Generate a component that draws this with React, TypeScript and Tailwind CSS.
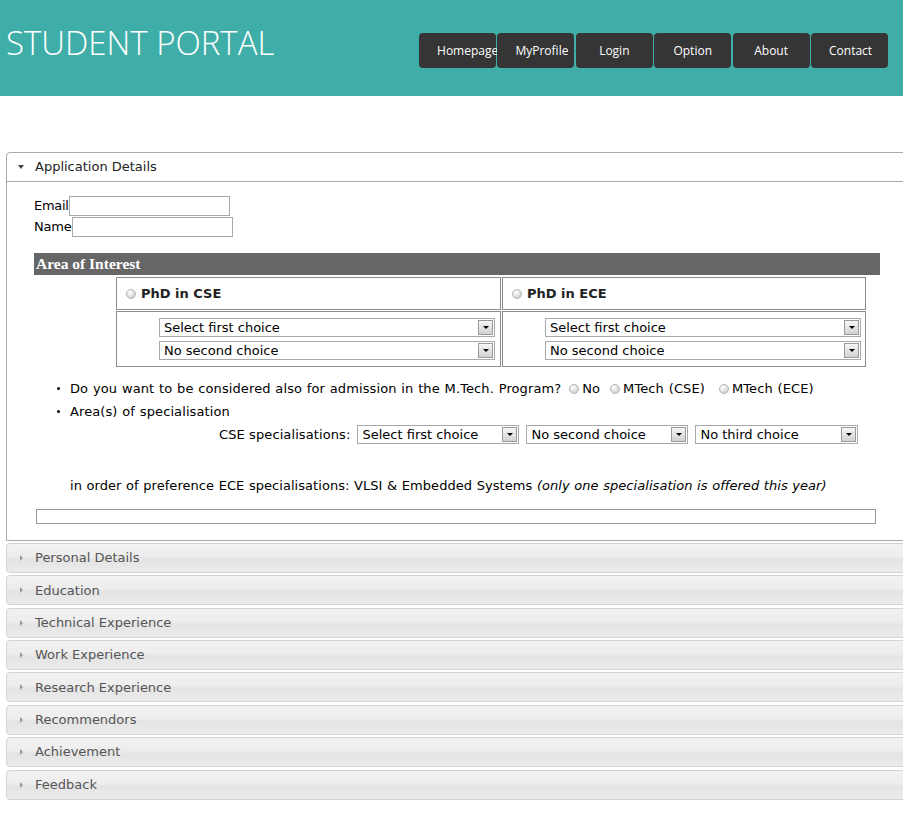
import React from "react";

const navItems = ["Homepage", "MyProfile", "Login", "Option", "About", "Contact"];
const closedPanels = [
  "Personal Details",
  "Education",
  "Technical Experience",
  "Work Experience",
  "Research Experience",
  "Recommendors",
  "Achievement",
  "Feedback",
];

function Radio() {
  return (
    <span className="inline-block h-[10px] w-[10px] shrink-0 rounded-full border border-[#b4b4b4] bg-[radial-gradient(circle_at_35%_30%,#ffffff,#d6d6d6_70%)]" />
  );
}

function Select({ label, width }: { label: string; width: string }) {
  return (
    <div className={`relative h-[19px] ${width} border border-[#a9a9a9] bg-white pl-[4px] text-[13px] leading-[17px] text-black`}>
      {label}
      <span className="absolute right-[1px] top-[1px] flex h-[15px] w-[15px] items-center justify-center border border-[#9a9a9a] bg-[linear-gradient(#f6f6f6,#d2d2d2)]">
        <span className="h-0 w-0 border-x-[3px] border-t-[3px] border-x-transparent border-t-black" />
      </span>
    </div>
  );
}

function Header() {
  return (
    <div className="flex h-[96px] bg-[#40aea8]">
      <h1 className="pl-[6px] pt-[26px] font-['Open_Sans',sans-serif] text-[33px] font-light leading-none text-white">
        STUDENT PORTAL
      </h1>
      <nav className="ml-auto mr-[15px] mt-[33px] flex gap-[1.4px]">
        {navItems.map((item) => (
          <div
            key={item}
            className="block h-[35px] w-[77px] whitespace-nowrap rounded-[4px] bg-[#353535] px-[18px] text-center font-['Open_Sans',sans-serif] text-[12px] leading-[35px] text-white"
          >
            {item}
          </div>
        ))}
      </nav>
    </div>
  );
}

function ApplicationPanel() {
  return (
    <div className="rounded-t-[4px] border border-[#aaaaaa] bg-white">
      <div className="flex h-[29px] items-center border-b border-[#aaaaaa] text-[13px] text-[#222]">
        <span className="ml-[11px] mr-[11px] h-0 w-0 border-x-[3px] border-t-[4px] border-x-transparent border-t-[#444]" />
        Application Details
      </div>

      <div className="pb-[16px] pl-[27px] pt-[13px] text-[13px] text-black">
        <div className="flex h-[21px] items-center">
          <span className="tracking-[-0.3px]">Email</span>
          <span className="h-[20px] w-[161px] border border-[#a9a9a9] bg-white" />
        </div>
        <div className="flex h-[21px] items-center">
          <span className="tracking-[-0.2px]">Name</span>
          <span className="h-[20px] w-[161px] border border-[#a9a9a9] bg-white" />
        </div>

        <div className="mt-[16px] h-[22px] w-[846px] bg-[#666666] pl-[2px] font-['Liberation_Serif',serif] text-[15.5px] font-bold leading-[22px] text-white">
          Area of Interest
        </div>

        <div className="ml-[82px] mt-[2px] grid grid-cols-[385px_364px] grid-rows-[33px_56px] gap-[1px]">
          <div className="flex items-center gap-[5px] border border-[#8c8c8c] pl-[9px] font-bold text-[#222]">
            <Radio />
            PhD in CSE
          </div>
          <div className="flex items-center gap-[5px] border border-[#8c8c8c] pl-[9px] font-bold text-[#222]">
            <Radio />
            PhD in ECE
          </div>
          <div className="flex flex-col gap-[4px] border border-[#8c8c8c] pl-[42px] pt-[6px]">
            <Select label="Select first choice" width="w-[336px]" />
            <Select label="No second choice" width="w-[336px]" />
          </div>
          <div className="flex flex-col gap-[4px] border border-[#8c8c8c] pl-[42px] pt-[6px]">
            <Select label="Select first choice" width="w-[316px]" />
            <Select label="No second choice" width="w-[316px]" />
          </div>
        </div>

        <ul className="mt-[10px] pl-[23px] tracking-[0.1px] [word-spacing:0.55px]">
          <li className="flex h-[23px] items-center">
            <span className="mr-[10px] h-[3px] w-[3px] rounded-full bg-black" />
            Do you want to be considered also for admission in the M.Tech. Program?
            <span className="ml-[8px] flex items-center gap-[3px]">
              <Radio />
              No
            </span>
            <span className="ml-[10px] flex items-center gap-[3px]">
              <Radio />
              MTech (CSE)
            </span>
            <span className="ml-[14px] flex items-center gap-[3px]">
              <Radio />
              MTech (ECE)
            </span>
          </li>
          <li className="flex h-[23px] items-center">
            <span className="mr-[10px] h-[3px] w-[3px] rounded-full bg-black" />
            Area(s) of specialisation
          </li>
        </ul>

        <div className="ml-[185px] mt-[2px] flex items-center gap-[7px]">
          <span className="tracking-[0.1px]">CSE specialisations:</span>
          <Select label="Select first choice" width="w-[162px]" />
          <Select label="No second choice" width="w-[162px]" />
          <Select label="No third choice" width="w-[163px]" />
        </div>

        <p className="ml-[36px] mt-[29px] h-[23px] tracking-[0.05px] leading-[23px] [word-spacing:0.4px]">
          in order of preference ECE specialisations: VLSI &amp; Embedded Systems{" "}
          <em>(only one specialisation is offered this year)</em>
        </p>

        <div className="ml-[2px] mt-[12px] h-[15px] w-[840px] border border-[#999999]" />
      </div>
    </div>
  );
}

export default function App() {
  return (
    <div className="min-h-[839px] w-full overflow-hidden bg-white font-['DejaVu_Sans',Verdana,sans-serif]">
      <Header />
      <div className="ml-[6px] mt-[56px] w-[930px]">
        <ApplicationPanel />
        {closedPanels.map((title) => (
          <div
            key={title}
            className="mt-[2.4px] flex h-[30px] items-center rounded-[4px] border border-[#d3d3d3] bg-[linear-gradient(#f2f2f2_0%,#ededed_45%,#e4e4e4_55%,#ebebeb_100%)] text-[13px] text-[#555555]"
          >
            <span className="ml-[13px] mr-[12px] h-0 w-0 border-y-[3px] border-l-[3px] border-y-transparent border-l-[#999]" />
            {title}
          </div>
        ))}
      </div>
    </div>
  );
}
